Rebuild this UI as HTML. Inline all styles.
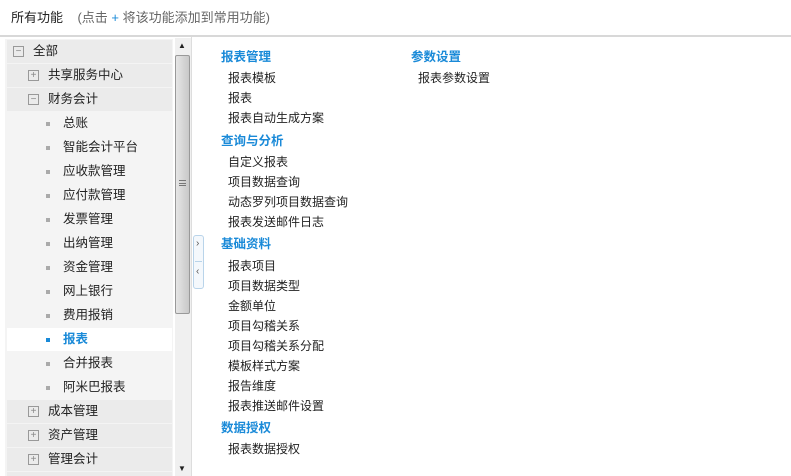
<!DOCTYPE html>
<html><head><meta charset="utf-8"><style>
*{margin:0;padding:0;box-sizing:border-box}
html,body{width:791px;height:476px;overflow:hidden}
body{background:#fff;font-family:"Liberation Sans","Noto Sans CJK SC",sans-serif;font-size:12px;color:#222;position:relative}
.a{position:absolute;white-space:nowrap}
.top{left:11px;top:9px;line-height:18px;font-size:13px}
.note{color:#666}
.hl{position:absolute;left:0;top:35px;width:791px;height:2px;background:#d8d8d8}
.row{position:absolute;left:7px;width:165px;height:23px;line-height:23px;font-size:12.5px}
.g{background:#ebebeb}
.c{background:#f4f4f4}
.sel{background:#fff;color:#1a8ad8;font-weight:bold}
.box{position:absolute;top:6px;width:11px;height:11px;border:1px solid #999;font-size:10px;line-height:9px;text-align:center;color:#888}
.dot{position:absolute;left:39px;top:10px;width:4px;height:4px;background:#aaa}
.sel .dot{background:#1a8ad8}
h4{position:absolute;font-size:12.5px;color:#1a8ad8;font-weight:bold;line-height:20px}
.it{position:absolute;line-height:20px;font-size:12px}
</style></head><body>
<div class="a top">所有功能 &nbsp;&nbsp;&nbsp;<span class="note">(点击 <span style="color:#1a8ad8">+</span> 将该功能添加到常用功能)</span></div>
<div class="hl"></div>
<div style="position:absolute;left:5px;top:39px;width:168px;height:437px;background:#f4f4f4"></div>
<div class="row g" style="top:40px"><span class="box" style="left:6px">−</span><span class="a" style="left:26px">全部</span></div>
<div class="row g" style="top:64px"><span class="box" style="left:21px">+</span><span class="a" style="left:41px">共享服务中心</span></div>
<div class="row g" style="top:88px"><span class="box" style="left:21px">−</span><span class="a" style="left:41px">财务会计</span></div>
<div class="row c" style="top:112px"><span class="dot"></span><span class="a" style="left:56px">总账</span></div>
<div class="row c" style="top:136px"><span class="dot"></span><span class="a" style="left:56px">智能会计平台</span></div>
<div class="row c" style="top:160px"><span class="dot"></span><span class="a" style="left:56px">应收款管理</span></div>
<div class="row c" style="top:184px"><span class="dot"></span><span class="a" style="left:56px">应付款管理</span></div>
<div class="row c" style="top:208px"><span class="dot"></span><span class="a" style="left:56px">发票管理</span></div>
<div class="row c" style="top:232px"><span class="dot"></span><span class="a" style="left:56px">出纳管理</span></div>
<div class="row c" style="top:256px"><span class="dot"></span><span class="a" style="left:56px">资金管理</span></div>
<div class="row c" style="top:280px"><span class="dot"></span><span class="a" style="left:56px">网上银行</span></div>
<div class="row c" style="top:304px"><span class="dot"></span><span class="a" style="left:56px">费用报销</span></div>
<div class="row sel" style="top:328px"><span class="dot"></span><span class="a" style="left:56px">报表</span></div>
<div class="row c" style="top:352px"><span class="dot"></span><span class="a" style="left:56px">合并报表</span></div>
<div class="row c" style="top:376px"><span class="dot"></span><span class="a" style="left:56px">阿米巴报表</span></div>
<div class="row g" style="top:400px"><span class="box" style="left:21px">+</span><span class="a" style="left:41px">成本管理</span></div>
<div class="row g" style="top:424px"><span class="box" style="left:21px">+</span><span class="a" style="left:41px">资产管理</span></div>
<div class="row g" style="top:448px"><span class="box" style="left:21px">+</span><span class="a" style="left:41px">管理会计</span></div>
<div class="row g" style="top:472px;height:4px"></div>
<div style="position:absolute;left:175px;top:38px;width:16px;height:438px;background:#f0f0f0"></div>
<div class="a" style="left:178px;top:41px;font-size:8px;color:#222">▲</div>
<div class="a" style="left:178px;top:464px;font-size:8px;color:#222">▼</div>
<div style="position:absolute;left:175px;top:55px;width:15px;height:259px;border:1px solid #999;border-radius:2px;background:linear-gradient(90deg,#e6e6e6,#d4d4d4 60%,#c8c8c8)"></div>
<div style="position:absolute;left:179px;top:180px;width:7px;height:6px;border-top:1px solid #777;border-bottom:1px solid #777"></div>
<div style="position:absolute;left:179px;top:183px;width:7px;height:1px;background:#777"></div>
<div style="position:absolute;left:191px;top:37px;width:1px;height:439px;background:#ddd"></div>
<div style="position:absolute;left:193px;top:235px;width:11px;height:54px;border:1px solid #b9d4ea;border-radius:3px;background:#f4f8fc"></div>
<div class="a" style="left:196px;top:238px;font-size:10px;color:#555">›</div>
<div style="position:absolute;left:195px;top:261px;width:7px;height:1px;background:#b9d4ea"></div>
<div class="a" style="left:196px;top:266px;font-size:10px;color:#555">‹</div>
<h4 style="left:221px;top:47px">报表管理</h4>
<div class="it" style="left:228px;top:68px">报表模板</div>
<div class="it" style="left:228px;top:88px">报表</div>
<div class="it" style="left:228px;top:108px">报表自动生成方案</div>
<h4 style="left:221px;top:131px">查询与分析</h4>
<div class="it" style="left:228px;top:152px">自定义报表</div>
<div class="it" style="left:228px;top:172px">项目数据查询</div>
<div class="it" style="left:228px;top:192px">动态罗列项目数据查询</div>
<div class="it" style="left:228px;top:212px">报表发送邮件日志</div>
<h4 style="left:221px;top:234px">基础资料</h4>
<div class="it" style="left:228px;top:256px">报表项目</div>
<div class="it" style="left:228px;top:276px">项目数据类型</div>
<div class="it" style="left:228px;top:296px">金额单位</div>
<div class="it" style="left:228px;top:316px">项目勾稽关系</div>
<div class="it" style="left:228px;top:336px">项目勾稽关系分配</div>
<div class="it" style="left:228px;top:356px">模板样式方案</div>
<div class="it" style="left:228px;top:376px">报告维度</div>
<div class="it" style="left:228px;top:396px">报表推送邮件设置</div>
<h4 style="left:221px;top:418px">数据授权</h4>
<div class="it" style="left:228px;top:439px">报表数据授权</div>
<h4 style="left:411px;top:47px">参数设置</h4>
<div class="it" style="left:418px;top:68px">报表参数设置</div>
</body></html>
